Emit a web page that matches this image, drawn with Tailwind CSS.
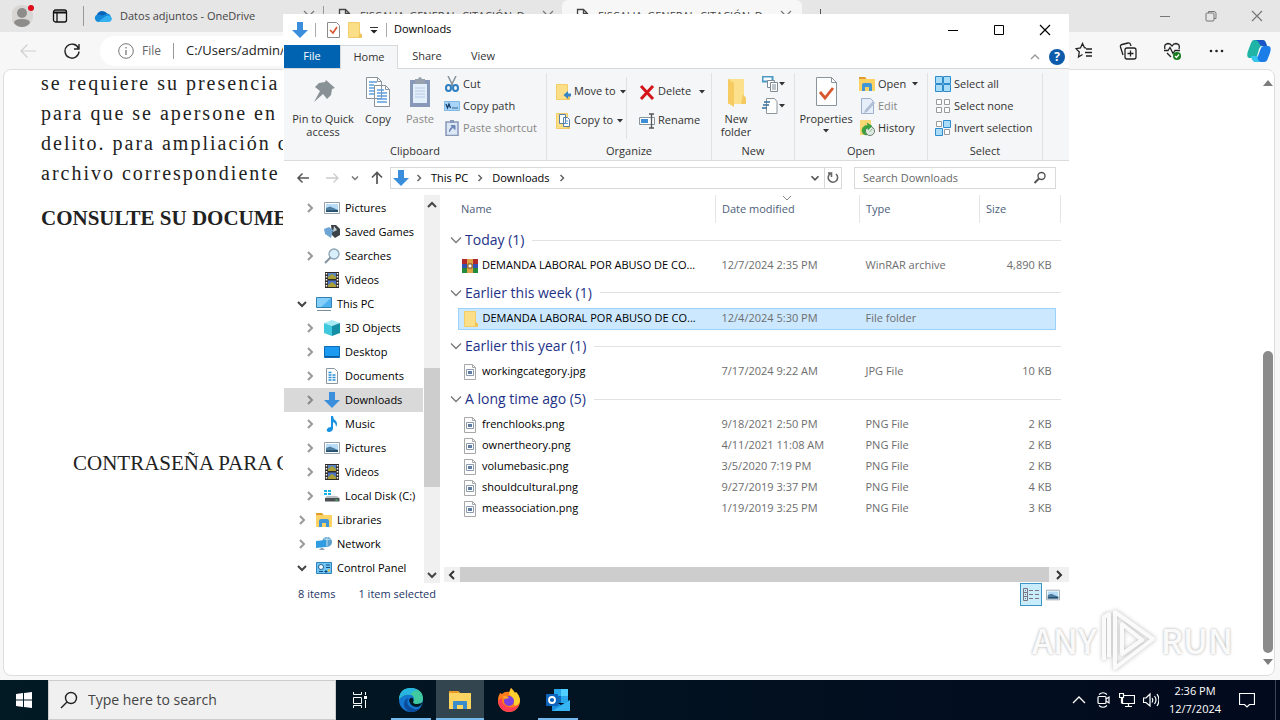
<!DOCTYPE html>
<html lang="en">
<head>
<meta charset="utf-8">
<meta name="viewport" content="width=device-width, initial-scale=1">
<title>Downloads</title>
<script src="https://cdn.jsdelivr.net/npm/@tailwindcss/browser@4"></script>
</head>
<body class="relative flex h-screen flex-col overflow-hidden bg-[#f7f7f7] font-['Open_Sans','Noto_Sans',sans-serif] text-[11px] text-black">

<!-- Shared icons -->
<svg class="hidden" aria-hidden="true">
  <symbol id="right" viewBox="0 0 16 16"><path d="M6 4l4 4-4 4" fill="none" stroke="currentColor" stroke-width="2"/></symbol>
  <symbol id="open" viewBox="0 0 16 16"><path d="M4 6l4 4 4-4" fill="none" stroke="currentColor" stroke-width="2"/></symbol>
  <symbol id="wide" viewBox="0 0 16 16"><path d="M3 5.500l5 5 5-5" fill="none" stroke="currentColor" stroke-width="1.3"/></symbol>
  <symbol id="caret" viewBox="0 0 8 8"><path d="M1 2h6L4 5.500z" fill="currentColor"/></symbol>
  <symbol id="x" viewBox="0 0 12 12"><path d="M1 1l10 10M11 1L1 11" fill="none" stroke="currentColor" stroke-width="1.2"/></symbol>
  <symbol id="doc" viewBox="0 0 16 16"><path d="M3.500 1.500h6l4 4v9h-10zM9.500 1.500v4h4" fill="none" stroke="#444" stroke-width="1.3"/></symbol>
  <symbol id="down" viewBox="0 0 16 16"><path d="M5 0h6v8h5l-8 8-8-8h5z" fill="#3a8edb"/></symbol>
  <symbol id="folder" viewBox="0 0 16 16"><path d="M1.500 .5h11v10.500l2 2v2.500h-13z" fill="#fbdf88" stroke="#f3cd68"/><path d="M12.500 10.500L15 13v2.500h-3.500z" fill="#f0c45a"/></symbol>
  <symbol id="pic" viewBox="0 0 16 16"><path d="M.5 2.500h15v11H.5z" fill="#fff" stroke="#93a1ab"/><path d="M2 4h12v8H2z" fill="#b7dcf6"/><path d="M2 8l4-1.500L14 10v2H2z" fill="#4c7c9f"/><path d="M2 10.500l12-.5v2H2z" fill="#24506e"/></symbol>
  <symbol id="img" viewBox="0 0 16 16"><path d="M2.500 .5h8l3 3v12h-11z" fill="#fdfdfd" stroke="#a8a8a8"/><path d="M10.500 .5v3h3" fill="none" stroke="#a8a8a8"/><path d="M4.500 5.500h7v6h-7z" fill="#fff" stroke="#8d9cad"/><path d="M6 7h4v3H6z" fill="#5f7ca5"/></symbol>
  <symbol id="film" viewBox="0 0 16 16"><path d="M1 0h14v16H1z" fill="#302b28"/><path d="M4 1h8v6H4z" fill="#5a86c8"/><path d="M4 8.500h8V15H4z" fill="#4d73c4"/><path d="M4 5l4-3 4 3v2H4zM4 13l4-3 4 3v2H4z" fill="#a9a136"/><path d="M2.500 1v14M13.500 1v14" stroke="#fff" stroke-width="1.500" stroke-dasharray="1.500 1.500"/></symbol>
  <symbol id="pc" viewBox="0 0 16 16"><path d="M.5 1.500h15v10H.5z" fill="#4eb2f0" stroke="#3281b4"/><path d="M1 2h14L5 11H1z" fill="#86cffa"/><path d="M1 14.500h14" stroke="#7d8b94"/></symbol>
  <symbol id="glass" viewBox="0 0 16 16"><circle cx="10" cy="6" r="5" fill="#d9effb" stroke="#8ba4b5" stroke-width="1.300"/><path d="M6.500 9.500L1 15" stroke="#8593a0" stroke-width="2"/></symbol>
  <symbol id="lib" viewBox="0 0 16 16"><path d="M0 1h6l1.500 2H16v12H0z" fill="#fbd264"/><path d="M0 1h6l1.500 2H0z" fill="#e19c2d"/><path d="M3 15V9q0-2 2-2h6q2 0 2 2v6h-3v-4H6v4z" fill="#3f97d8"/></symbol>
</svg>

<!-- Browser tab strip -->
<header class="flex h-8 shrink-0 items-center bg-[#e6e6e6] pl-3">
  <button aria-label="Profile" class="h-6 w-6 shrink-0"><svg viewBox="0 0 24 24"><circle cx="10" cy="12" r="11" fill="#d8d6d4"/><circle cx="10" cy="9" r="5" fill="#8e8c8a"/><path d="M2 19q0-4 8-4t8 4q-3 4-8 4t-8-4z" fill="#8e8c8a"/><circle cx="19" cy="4" r="3" fill="#e00b1c"/></svg></button>
  <button aria-label="Tab actions" class="ml-4 h-4 w-4 shrink-0"><svg viewBox="0 0 16 16" fill="none" stroke="#111" stroke-width="1.300"><rect x="1.500" y="2" width="13" height="12" rx="2"/><path d="M1.500 4.500h13" stroke-width="2"/><path d="M5 4.500V14"/></svg></button>
  <i class="ml-[15px] h-5 w-px bg-[#999]"></i>
  <div class="flex w-[239px] items-center pl-2.5">
    <svg class="h-4 w-[18px]" viewBox="0 0 18 16"><path d="M4 14a4 4 0 0 1-1-7.500A6 6 0 0 1 13 5.500 4.500 4.500 0 0 1 14.500 14z" fill="#1689d8"/><path d="M4 14L12 8q5-2 6 3-1 3-3.500 3z" fill="#35b1f2"/><path d="M3 6.500A6 6 0 0 1 13 5.500l-4 2z" fill="#0a63ba"/></svg>
    <span class="ml-2 flex-1 whitespace-nowrap text-[#444]">Datos adjuntos - OneDrive</span>
    <button aria-label="Close tab" class="mr-2 h-3 w-3 text-[#777]"><svg viewBox="0 0 12 12"><use href="#x"/></svg></button>
  </div>
  <i class="h-5 w-px bg-[#999]"></i>
  <div class="flex w-[238px] items-center pl-3">
    <svg class="h-4 w-4"><use href="#doc"/></svg>
    <span class="ml-2 w-[176px] whitespace-nowrap text-[#444]">FISCALIA_GENERAL_CITACIÓN_D</span>
    <button aria-label="Close tab" class="ml-1.5 h-3 w-3 text-[#777]"><svg viewBox="0 0 12 12"><use href="#x"/></svg></button>
  </div>
  <div class="flex h-8 w-[240px] items-center rounded-t-md bg-[#f7f7f7] pl-3">
    <svg class="h-4 w-4"><use href="#doc"/></svg>
    <span class="ml-2 w-[176px] whitespace-nowrap text-[#444]">FISCALIA_GENERAL_CITACIÓN_D</span>
    <button aria-label="Close tab" class="ml-1.5 h-3 w-3 text-[#777]"><svg viewBox="0 0 12 12"><use href="#x"/></svg></button>
  </div>
  <button aria-label="New tab" class="ml-2.5 h-4 w-4"><svg viewBox="0 0 16 16"><path d="M8.500 1v14M1 8h14" stroke="#555"/></svg></button>
  <div class="ml-auto flex gap-[34px] pr-[17px] text-[#777]">
    <button aria-label="Minimize" class="h-3 w-3"><svg viewBox="0 0 12 12"><path d="M1 6.500h10" stroke="currentColor"/></svg></button>
    <button aria-label="Restore" class="h-3 w-3"><svg viewBox="0 0 12 12" fill="none" stroke="currentColor"><rect x="1" y="3" width="8" height="8" rx="1"/><path d="M3.500 3V1.500H9q2 0 2 2V8.500H9"/></svg></button>
    <button aria-label="Close" class="h-3 w-3"><svg viewBox="0 0 12 12"><use href="#x"/></svg></button>
  </div>
</header>

<!-- Browser toolbar -->
<div class="flex h-[37px] shrink-0 items-center pl-5 text-[#222]">
  <button aria-label="Back" class="h-4 w-4"><svg viewBox="0 0 16 16" fill="none" stroke="#cfcfcf" stroke-width="1.200"><path d="M16 8H1M7.500 1.500L1 8l6.500 6.500"/></svg></button>
  <button aria-label="Refresh" class="ml-7 h-4 w-4"><svg viewBox="0 0 16 16" fill="none" stroke="currentColor" stroke-width="1.400"><path d="M14.500 5.500A7 7 0 1 0 15 8.500M15 1v5h-5"/></svg></button>
  <div class="ml-5 flex h-[30px] flex-1 items-center rounded-full bg-white pl-[18px]">
    <svg class="h-4 w-4" viewBox="0 0 16 16" fill="none" stroke="#777"><circle cx="8" cy="8" r="7.300"/><path d="M8 7v5M8 4v1.500" stroke-width="1.300"/></svg>
    <span class="ml-2 text-xs text-[#666]">File</span>
    <i class="mx-3 h-4 w-px bg-[#999]"></i>
    <input aria-label="Address" class="min-w-0 flex-1 text-[13px] text-[#222]" value="C:/Users/admin/">
  </div>
  <div class="ml-2 flex items-center gap-[26px] pr-[9px]">
    <button aria-label="Favorites" class="h-[18px] w-[18px]"><svg viewBox="0 0 18 18" fill="none" stroke="currentColor" stroke-width="1.300"><path d="M11 6L9.500 5.700 7.500 1.500 5.500 6 1 6.700l3.300 3.300L3.500 15l4-2.500M11 7h6M10 10.500h7M11 14h6"/></svg></button>
    <button aria-label="Collections" class="h-[18px] w-[18px]"><svg viewBox="0 0 18 18" fill="none" stroke="currentColor" stroke-width="1.300"><rect x="6" y="6" width="11" height="11" rx="2"/><path d="M11.500 8.500v6M8.500 11.500h6M4 13L1.500 5q-.5-2 1.500-2.500l6-1.500q2-.3 2.500 1.500l.5 1.500"/></svg></button>
    <button aria-label="Browser essentials" class="h-[18px] w-[18px]"><svg viewBox="0 0 18 18" fill="none" stroke="currentColor" stroke-width="1.300"><path d="M2 7q-1.500-5 3-5.500Q7.500 1.500 9 4q1.500-2.500 4-2.500 4.500.5 3 5.500M4 11l4 4M1 8.500h4l2-3 3 6 2-3h5"/><circle cx="14" cy="14" r="4" fill="#177c1b" stroke="none"/><path d="M12 14l1.500 1.500L16 12.500" stroke="#fff"/></svg></button>
    <button aria-label="Settings and more" class="h-[18px] w-[18px]"><svg viewBox="0 0 18 18" fill="currentColor"><circle cx="4" cy="9" r="1.300"/><circle cx="9.500" cy="9" r="1.300"/><circle cx="15" cy="9" r="1.300"/></svg></button>
    <button aria-label="Copilot" class="-ml-1 h-6 w-6"><svg viewBox="0 0 24 24"><path d="M7 1h9q2 0 3 3l1 3h-5q-2 0-3 3l-2 7q-1 2-3 2H2q-3-1-1-7L4 4q1-3 3-3z" fill="#20b4a6"/><path d="M7 1h9q2 0 3 3l1 3h-4q-3 0-4-3-1-3-5-3z" fill="#1c55c8"/><path d="M17 7h4q4 0 2 7l-2 5q-1 4-4 4H9q-3 0-4-4h3q2 0 3-2l3-8q1-2 3-2z" fill="#1a7de8"/><path d="M4 17h6q1 6 5 6H9q-4 0-5-6z" fill="#35c6ee"/></svg></button>
  </div>
</div>

<!-- Page viewport -->
<main class="mr-[5px] mb-1 ml-[3px] flex min-h-0 flex-1 overflow-hidden rounded-lg border border-[#dedede] bg-white">
  <article class="flex-1 overflow-hidden pl-[37px] font-['Liberation_Serif',serif] text-xl leading-[30px] whitespace-nowrap text-[#222]">
    <p class="-mt-[2px] tracking-widest">se requiere su presencia<br>para que se apersone en<br>delito. para ampliación d<br>archivo correspondiente</p>
    <p class="mt-[15px] text-[21px] font-bold">CONSULTE SU DOCUME</p>
    <p class="mt-[215px] ml-8 text-[21px]">CONTRASEÑA PARA C</p>
  </article>
  <div class="flex w-3 flex-col items-center py-2" role="scrollbar" aria-label="Page scroll" aria-valuenow="90">
    <svg class="h-2.5 w-2.5" viewBox="0 0 10 10"><path d="M5 2l5 6H0z" fill="#7d7d7d"/></svg>
    <div class="mt-auto h-[302px] w-2.5 rounded-full bg-[#8b8b8b]"></div>
    <svg class="mt-1 h-2.5 w-2.5" viewBox="0 0 10 10"><path d="M0 2h10L5 8z" fill="#7d7d7d"/></svg>
  </div>
</main>

<!-- File Explorer window -->
<section aria-label="File Explorer" class="absolute top-[14px] left-[283px] flex w-[786px] flex-col bg-white pl-px [&_svg]:shrink-0">
  <div class="flex h-[31px] items-center pl-2">
    <svg class="h-4 w-4"><use href="#down"/></svg>
    <i class="ml-[7px] h-3.5 w-px bg-[#aaa]"></i>
    <button aria-label="Properties" class="ml-[9px] h-4 w-4"><svg viewBox="0 0 16 16"><path d="M2.500 .5h9l3 3v12h-12z" fill="#fff" stroke="#8b8b8b"/><path d="M5 8l3 3 4-6" fill="none" stroke="#d65532" stroke-width="1.700"/></svg></button>
    <button aria-label="New folder" class="ml-1.5 h-4 w-4"><svg viewBox="0 0 16 16"><use href="#folder"/></svg></button>
    <button aria-label="Customize toolbar" class="ml-[5px] h-3 w-3"><svg viewBox="0 0 12 12"><path d="M2 3.500h8" stroke="#333"/><path d="M2.500 6h7L6 9.500z" fill="#222"/></svg></button>
    <i class="ml-1.5 h-3.5 w-px bg-[#aaa]"></i>
    <h1 class="ml-[7px] text-[11px]">Downloads</h1>
    <div class="ml-auto flex gap-[34px] pr-[18px]">
      <button aria-label="Minimize" class="h-3 w-3"><svg viewBox="0 0 12 12"><path d="M1 6.500h10" stroke="#000"/></svg></button>
      <button aria-label="Maximize" class="h-3 w-3"><svg viewBox="0 0 12 12"><path d="M1.500 1.500h9v9h-9z" fill="none" stroke="#000"/></svg></button>
      <button aria-label="Close" class="h-3 w-3"><svg viewBox="0 0 12 12"><use href="#x"/></svg></button>
    </div>
  </div>

  <div class="flex h-6 items-stretch border-b border-[#d6d8da] text-[#333]">
    <button class="w-14 bg-[#0063b1] text-white">File</button>
    <button class="-mb-px w-[58px] border border-b-0 border-[#d6d8da] bg-[#f5f6f7]">Home</button>
    <button class="w-[58px]">Share</button>
    <button class="w-[54px]">View</button>
    <button aria-label="Collapse ribbon" class="mr-1.5 ml-auto w-4 text-[#999]"><svg class="h-4 w-4 rotate-180" viewBox="0 0 16 16"><path d="M4 6l4 4 4-4" fill="none" stroke="currentColor" stroke-width="1.400"/></svg></button>
    <button aria-label="Help" class="mr-1 grid w-4 place-items-center"><span class="grid h-4 w-4 place-items-center rounded-full bg-[#0d5bab] text-xs font-bold text-white">?</span></button>
  </div>

  <!-- Ribbon -->
  <div class="flex h-[92px] border-b border-[#d9dbdd] bg-[#f5f6f7] pt-1 text-[#333]">
    <div class="flex w-[263px] flex-col border-r border-[#e0e2e4]">
      <div class="flex h-[66px]">
        <button class="flex w-[78px] flex-col items-center pt-[3px] leading-[13px]"><svg class="mb-1 h-8 w-8" viewBox="0 0 32 32"><path d="M19 4l9 8-3 1-1 6-4 4-4-5-9 8 6-11-5-4 4-4 6-1z" fill="#889196"/></svg><span class="whitespace-nowrap">Pin to Quick</span><span>access</span></button>
        <button class="flex w-8 flex-col items-center pt-[3px] leading-[13px]"><svg class="mb-1 h-8 w-8" viewBox="0 0 32 32"><path d="M4.500 1.500h11l4 4v17h-15zM12.500 9.500h11l4 4v17h-15z" fill="#fff" stroke="#8a949c"/><path d="M15.500 1.500v4h4M23.500 9.500v4h4" fill="none" stroke="#8a949c"/><path d="M7 6h8M7 9h5M7 12h5M7 15h5M7 18h5M15 14h7M15 17h10M15 20h10M15 23h10M15 26h10" stroke="#5c9de0" stroke-width="1.500"/></svg>Copy</button>
        <button class="ml-2.5 flex w-8 flex-col items-center pt-[3px] leading-[13px] text-[#888]"><svg class="mb-1 h-8 w-8" viewBox="0 0 32 32"><path d="M6 4h20v27H6z" fill="#8798b8"/><path d="M9 8h14v19H9z" fill="#e3eefb"/><path d="M11 3h3q2-4 4 0h3v5H11z" fill="#97a1ad"/><path d="M11 12h10M11 15h10M11 18h10M11 21h10" stroke="#b7c9e6"/></svg>Paste</button>
        <div class="ml-2 flex flex-col whitespace-nowrap">
          <button class="flex h-[22px] items-center gap-[3px]"><svg class="h-4 w-4" viewBox="0 0 16 16" fill="none"><path d="M4 0l5 10M12 0L7 10" stroke="#87929b" stroke-width="1.500"/><ellipse cx="4.500" cy="12" rx="2.500" ry="3" stroke="#2e7fc2" stroke-width="2"/><ellipse cx="11.500" cy="12" rx="2.500" ry="3" stroke="#2e7fc2" stroke-width="2"/></svg>Cut</button>
          <button class="flex h-[22px] items-center gap-[3px]"><svg class="h-4 w-4" viewBox="0 0 16 16"><path d="M.5 3.500h15v9H.5z" fill="#a7d4f7" stroke="#7eb8e6"/><path d="M2 6l1.500 4L5 6l1.500 4M8.500 10h1M10.500 10h1M12.500 10h1" fill="none" stroke="#123e6d" stroke-width="1.300"/></svg>Copy path</button>
          <button class="flex h-[22px] items-center gap-[3px] text-[#888]"><svg class="h-4 w-4" viewBox="0 0 16 16"><path d="M2 2h12v13.500H2z" fill="#dce7f5" stroke="#8798b8" stroke-width="1.500"/><path d="M6 0h4v3H6z" fill="#8798b8"/><path d="M5.500 12q0-5 4-5M7 5.500h4v4z" fill="#6b86b5" stroke="#6b86b5"/></svg>Paste shortcut</button>
        </div>
      </div>
      <p class="pt-1 text-center leading-4">Clipboard</p>
    </div>

    <div class="flex w-[165px] flex-col border-r border-[#e0e2e4]">
      <div class="flex h-[66px] pt-1">
        <div class="flex w-20 flex-col border-r border-[#e0e2e4] pl-2 whitespace-nowrap">
          <button class="flex h-[29px] items-center gap-[3px]"><svg class="h-4 w-4" viewBox="0 0 16 16"><use href="#folder"/><path d="M16 9.500h-3V7L8.500 11l4.500 4v-2.500h3z" fill="#3584c8"/></svg>Move to<svg class="h-2 w-2"><use href="#caret"/></svg></button>
          <button class="flex h-[29px] items-center gap-[3px]"><svg class="h-4 w-4" viewBox="0 0 16 16"><use href="#folder"/><path d="M4.500 1.500h6v9h-6zM8.500 4.500h4l2 2v7h-6z" fill="#fff" stroke="#577fa8"/><path d="M10 8h3M10 10.500h3" stroke="#5c9de0"/></svg>Copy to<svg class="h-2 w-2"><use href="#caret"/></svg></button>
        </div>
        <div class="flex flex-col pl-3 whitespace-nowrap">
          <button class="flex h-[29px] items-center gap-[3px]"><svg class="h-4 w-4" viewBox="0 0 16 16"><path d="M2 2l12 13M14 2L2 15" stroke="#d4161b" stroke-width="3"/></svg>Delete<svg class="ml-1 h-2 w-2"><use href="#caret"/></svg></button>
          <button class="flex h-[29px] items-center gap-[3px]"><svg class="h-4 w-4" viewBox="0 0 16 16"><path d="M.5 4.500h15v7H.5z" fill="#fff" stroke="#8a949c"/><path d="M2 6h7v4H2z" fill="#3d8ed4"/><path d="M10 1h5M10 15h5M12.500 1v14" stroke="#555" stroke-width="1.300"/></svg>Rename</button>
        </div>
      </div>
      <p class="pt-1 text-center leading-4">Organize</p>
    </div>

    <div class="flex w-[83px] flex-col border-r border-[#e0e2e4]">
      <div class="flex h-[66px]">
        <button class="flex w-12 flex-col items-center pt-[3px] leading-[13px]"><svg class="mb-1 h-8 w-8" viewBox="0 0 32 32"><path d="M8 3h16v17l2 3v5H8z" fill="#fce08c"/><path d="M8 3l6 4v24l-6-4z" fill="#f6cb62"/><path d="M23 18l3 4v6h-5z" fill="#f5ca60"/></svg><span>New</span><span>folder</span></button>
        <div class="flex flex-col pl-0.5">
          <button aria-label="New item" class="flex h-[22px] items-center"><svg class="h-4 w-4" viewBox="0 0 16 16" fill="#fff" stroke="#7d8b96"><path d="M.5 .5h10v5H.5z" stroke="#4a9ac4" stroke-width="2"/><path d="M5.500 4.500h7v7h-7z"/><path d="M8.500 6.500h7v9h-7zM10 9h4M10 11h4M10 13h4"/></svg><svg class="h-2 w-2"><use href="#caret"/></svg></button>
          <button aria-label="Easy access" class="flex h-[22px] items-center"><svg class="h-4 w-4" viewBox="0 0 16 16"><path d="M4.500 .5h8l2.500 3v12H4.500z" fill="#fff" stroke="#8a949c"/><path d="M2 4h6M1 7h6M0 10h5" stroke="#356f9f" stroke-width="1.300"/></svg><svg class="h-2 w-2"><use href="#caret"/></svg></button>
        </div>
      </div>
      <p class="pt-1 text-center leading-4">New</p>
    </div>

    <div class="flex w-[133px] flex-col border-r border-[#e0e2e4]">
      <div class="flex h-[66px]">
        <button class="flex w-[62px] flex-col items-center pt-[3px] leading-[13px]"><svg class="mb-1 h-8 w-8" viewBox="0 0 32 32"><path d="M6.500 1.500h15l5 5v23h-20z" fill="#fff" stroke="#8a949c"/><path d="M21.500 1.500v5h5" fill="none" stroke="#8a949c"/><path d="M10 16l5 6 8-10" fill="none" stroke="#d9572e" stroke-width="2.800"/></svg>Properties<svg class="mt-0.5 h-2 w-2"><use href="#caret"/></svg></button>
        <div class="flex flex-col pl-0.5 whitespace-nowrap">
          <button class="flex h-[22px] items-center gap-[3px]"><svg class="h-4 w-4" viewBox="0 0 16 16"><use href="#lib"/></svg>Open<svg class="ml-0.5 h-2 w-2"><use href="#caret"/></svg></button>
          <button class="flex h-[22px] items-center gap-[3px] text-[#888]"><svg class="h-4 w-4" viewBox="0 0 16 16"><path d="M2.500 .5h9l3 3v12h-12z" fill="#e6eefa" stroke="#9fb0cc"/><path d="M14 3l-8 9-1 3 3-1 8-9z" fill="#b0bfd6"/></svg>Edit</button>
          <button class="flex h-[22px] items-center gap-[3px]"><svg class="h-4 w-4" viewBox="0 0 16 16"><path d="M1 0h11v15H1z" fill="#f8d775"/><circle cx="11" cy="11" r="4.500" fill="#dfe9e2" stroke="#6b7d70"/><path d="M13.500 8.500L10.500 12M3 10q1-5 6-4.500L8 3l5 3-4 4V8q-3 0-3 3 0 2 2 4-5 0-5-5z" fill="#36a541" stroke="#2f8a38" stroke-width=".5"/></svg>History</button>
        </div>
      </div>
      <p class="pt-1 text-center leading-4">Open</p>
    </div>

    <div class="flex w-[115px] flex-col border-r border-[#e0e2e4]">
      <div class="flex h-[66px] flex-col pl-[7px] whitespace-nowrap">
        <button class="flex h-[22px] items-center gap-[3px]"><svg class="h-4 w-4" viewBox="0 0 16 16" fill="#a9dcf9" stroke="#2e8ccd"><path d="M.5 .5h7v7h-7zM8.500 .5h7v7h-7zM.5 8.500h7v7h-7zM8.500 8.500h7v7h-7z"/></svg>Select all</button>
        <button class="flex h-[22px] items-center gap-[3px]"><svg class="h-4 w-4" viewBox="0 0 16 16" fill="#fff" stroke="#9a9a9a"><path d="M1.500 1.500h5v5h-5zM9.500 1.500h5v5h-5zM1.500 9.500h5v5h-5zM9.500 9.500h5v5h-5z"/></svg>Select none</button>
        <button class="flex h-[22px] items-center gap-[3px]"><svg class="h-4 w-4" viewBox="0 0 16 16"><path d="M1.500 1.500h5v5h-5zM9.500 9.500h5v5h-5z" fill="#fff" stroke="#9a9a9a"/><path d="M8.500 .5h7v7h-7zM.5 8.500h7v7h-7z" fill="#a9dcf9" stroke="#2e8ccd"/></svg>Invert selection</button>
      </div>
      <p class="pt-1 text-center leading-4">Select</p>
    </div>
  </div>

  <!-- Address bar -->
  <div class="flex h-[34px] items-center pl-[11px] text-[#333]">
    <button aria-label="Back" class="h-4 w-4"><svg viewBox="0 0 16 16" fill="none" stroke="#555" stroke-width="1.500"><path d="M14 8H3M7.500 3.500L3 8l4.500 4.500"/></svg></button>
    <button aria-label="Forward" class="ml-3.5 h-4 w-4"><svg viewBox="0 0 16 16" fill="none" stroke="#ccc" stroke-width="1.300"><path d="M1 8h11M8.500 3.500L13 8l-4.500 4.500"/></svg></button>
    <button aria-label="Recent locations" class="ml-2 h-3 w-3 text-[#777]"><svg viewBox="0 0 16 16"><use href="#open"/></svg></button>
    <button aria-label="Up" class="ml-2 h-4 w-4"><svg viewBox="0 0 16 16" fill="none" stroke="#555" stroke-width="1.700"><path d="M8 14V3M3 7.500L8 2.500l5 5"/></svg></button>
    <nav aria-label="Location" class="ml-[5px] flex h-[22px] flex-1 items-center border border-[#d9d9d9] pl-0.5 whitespace-nowrap">
      <svg class="h-4 w-4"><use href="#down"/></svg>
      <svg class="ml-1 h-3 w-3 text-[#666]"><use href="#right"/></svg>
      <a href="#" class="ml-1.5 text-black">This PC</a>
      <svg class="mx-1.5 h-3 w-3 text-[#666]"><use href="#right"/></svg>
      <a href="#" class="text-black">Downloads</a>
      <svg class="ml-1.5 h-3 w-3 text-[#666]"><use href="#right"/></svg>
      <button aria-label="Previous locations" class="mr-0.5 ml-auto h-3.5 w-3.5 text-[#555]"><svg viewBox="0 0 16 16"><use href="#open"/></svg></button>
      <button aria-label="Refresh" class="flex h-full w-[17px] items-center justify-center border-l border-[#d9d9d9]"><svg class="h-3.5 w-3.5" viewBox="0 0 14 14" fill="none" stroke="#666" stroke-width="1.600"><path d="M10 3a4.700 4.700 0 1 1-5.500-.5M2 2h3.500v4"/></svg></button>
    </nav>
    <label class="mr-[13px] ml-3 flex h-[22px] w-[202px] items-center border border-[#d9d9d9] pr-2 pl-2">
      <input type="text" aria-label="Search Downloads" placeholder="Search Downloads" class="min-w-0 flex-1 placeholder:text-[#666]">
      <svg class="h-3.5 w-3.5" viewBox="0 0 14 14" fill="none" stroke="#555" stroke-width="1.400"><circle cx="8.500" cy="5" r="3.500"/><path d="M6 7.500L1.500 12" stroke-width="2"/></svg>
    </label>
  </div>

  <div class="flex h-[388px]">
    <!-- Navigation tree -->
    <ul class="w-[139px] overflow-hidden pt-px leading-6 whitespace-nowrap">
      <li class="flex h-6 items-center pl-[18px]"><svg class="mr-1.5 h-4 w-4 text-[#999]"><use href="#right"/></svg><svg class="mr-[5px] h-4 w-4"><use href="#pic"/></svg>Pictures</li>
      <li class="flex h-6 items-center pl-10"><svg class="mr-[5px] h-4 w-4" viewBox="0 0 16 16"><path d="M7 1l5 0 4 4v6l-5 3-3-3z" fill="#3b4347"/><path d="M0 5l5-2 4 3-2 8-6-4z" fill="#6ea5d3"/><path d="M10 2l3 4-4 2z" fill="#c9d3da"/></svg>Saved Games</li>
      <li class="flex h-6 items-center pl-[18px]"><svg class="mr-1.5 h-4 w-4 text-[#999]"><use href="#right"/></svg><svg class="mr-[5px] h-4 w-4"><use href="#glass"/></svg>Searches</li>
      <li class="flex h-6 items-center pl-10"><svg class="mr-[5px] h-4 w-4"><use href="#film"/></svg>Videos</li>
      <li class="flex h-6 items-center pl-2.5"><svg class="mr-[6px] h-4 w-4 text-[#444]"><use href="#open"/></svg><svg class="mr-[5px] h-4 w-4"><use href="#pc"/></svg>This PC</li>
      <li class="flex h-6 items-center pl-[18px]"><svg class="mr-1.5 h-4 w-4 text-[#999]"><use href="#right"/></svg><svg class="mr-[5px] h-4 w-4" viewBox="0 0 16 16"><path d="M0 3l8-3 8 3-8 3z" fill="#a8ebf5"/><path d="M0 3l8 3v10l-8-3z" fill="#40c8de"/><path d="M16 3L8 6v10l8-3z" fill="#168ea6"/></svg>3D Objects</li>
      <li class="flex h-6 items-center pl-[18px]"><svg class="mr-1.5 h-4 w-4 text-[#999]"><use href="#right"/></svg><svg class="mr-[5px] h-4 w-4" viewBox="0 0 16 16"><path d="M.5 2.500h15v11H.5z" fill="#1a9bf1" stroke="#0b6cb8"/><path d="M1 12.500h14" stroke="#0b5a9c"/></svg>Desktop</li>
      <li class="flex h-6 items-center pl-[18px]"><svg class="mr-1.5 h-4 w-4 text-[#999]"><use href="#right"/></svg><svg class="mr-[5px] h-4 w-4" viewBox="0 0 16 16"><path d="M2.500 .5h8l3 3v12h-11z" fill="#fff" stroke="#8b97a0"/><path d="M4.500 4.500h4M4.500 7h7M4.500 9.500h7M4.500 12h7" stroke="#2f8fd4" stroke-width="1.500" stroke-dasharray="3 1"/></svg>Documents</li>
      <li class="flex h-6 items-center bg-[#d9d9d9] pl-[18px]" aria-current="true"><svg class="mr-1.5 h-4 w-4 text-[#888]"><use href="#right"/></svg><svg class="mr-[5px] h-4 w-4"><use href="#down"/></svg>Downloads</li>
      <li class="flex h-6 items-center pl-[18px]"><svg class="mr-1.5 h-4 w-4 text-[#999]"><use href="#right"/></svg><svg class="mr-[5px] h-4 w-4" viewBox="0 0 16 16"><path d="M7 0h2q0 3 3 5 2 3 0 6 0-4-3-5v7q-1 3-4 3-3-.5-2-3 1-2 4-2z" fill="#1592e2"/></svg>Music</li>
      <li class="flex h-6 items-center pl-[18px]"><svg class="mr-1.5 h-4 w-4 text-[#999]"><use href="#right"/></svg><svg class="mr-[5px] h-4 w-4"><use href="#pic"/></svg>Pictures</li>
      <li class="flex h-6 items-center pl-[18px]"><svg class="mr-1.5 h-4 w-4 text-[#999]"><use href="#right"/></svg><svg class="mr-[5px] h-4 w-4"><use href="#film"/></svg>Videos</li>
      <li class="flex h-6 items-center pl-[18px]"><svg class="mr-1.5 h-4 w-4 text-[#999]"><use href="#right"/></svg><svg class="mr-[5px] h-4 w-4" viewBox="0 0 16 16"><path d="M0 2h3v2H0zM4 2h3v2H4zM0 5h3v2H0zM4 5h3v2H4z" fill="#18b2e8"/><path d="M3 8h10l2.500 2H1z" fill="#b9bfc3"/><path d="M1 10h14.500v3.500H1z" fill="#4b5155"/><path d="M11.500 12h2" stroke="#4de06a"/></svg>Local Disk (C:)</li>
      <li class="flex h-6 items-center pl-2.5"><svg class="mr-[6px] h-4 w-4 text-[#999]"><use href="#right"/></svg><svg class="mr-[5px] h-4 w-4"><use href="#lib"/></svg>Libraries</li>
      <li class="flex h-6 items-center pl-2.5"><svg class="mr-[6px] h-4 w-4 text-[#999]"><use href="#right"/></svg><svg class="mr-[5px] h-4 w-4" viewBox="0 0 16 16"><circle cx="11" cy="6" r="5" fill="#5aa0cc"/><path d="M8 3q4 1 7 0M11 1v9" stroke="#b9dff4" fill="none"/><path d="M0 5l10-1v7L0 12z" fill="#2f9be0"/><path d="M3 14h6l-2-2H5z" fill="#8fa3b0"/></svg>Network</li>
      <li class="flex h-6 items-center pl-2.5"><svg class="mr-[6px] h-4 w-4 text-[#444]"><use href="#open"/></svg><svg class="mr-[5px] h-4 w-4" viewBox="0 0 16 16"><path d="M.5 2.500h15v11H.5z" fill="#6fc6f4" stroke="#2f83b8"/><circle cx="5" cy="7" r="2.500" fill="#fff" stroke="#1b5f93"/><path d="M10 5h4M10 7.500h4M3 11.500h4M9 11h2v1H9z" stroke="#114b7c"/><path d="M12 10.500h2" stroke="#f2c23b" stroke-width="2"/></svg>Control Panel</li>
    </ul>
    <div class="ml-px flex w-4 flex-col items-center bg-[#f0f0f0] text-[#444]" role="scrollbar" aria-label="Tree scroll" aria-valuenow="60">
      <svg class="mt-0.5 h-4 w-4 rotate-180"><use href="#open"/></svg>
      <div class="mt-auto mb-20 h-[119px] w-4 bg-[#cdcdcd]"></div>
      <svg class="h-4 w-4"><use href="#open"/></svg>
    </div>

    <!-- File list -->
    <div class="ml-1 flex min-w-0 flex-1 flex-col">
      <table class="mr-2 table-fixed border-collapse text-left text-[#6d6d6d]">
        <colgroup><col class="w-[14px]"><col><col class="w-36"><col class="w-[120px]"><col class="w-[76px]"><col class="w-[5px]"></colgroup>
        <thead class="text-[#4c607a]">
          <tr class="h-7">
            <td></td>
            <th class="border-r border-[#e5e5e5] pl-[3px] font-normal">Name</th>
            <th class="relative border-r border-[#e5e5e5] pl-1.5 font-normal">Date modified<svg class="absolute top-0 left-[65px] h-2 w-3 text-[#888]" viewBox="0 0 12 8"><path d="M2 1l4 4 4-4" fill="none" stroke="currentColor"/></svg></th>
            <th class="border-r border-[#e5e5e5] pl-1.5 font-normal">Type</th>
            <th class="pl-1.5 font-normal">Size</th>
            <td class="border-r border-[#e5e5e5]"></td>
          </tr>
        </thead>
        <tbody>
          <tr class="h-8"><th colspan="6" class="pt-0.5 font-normal"><div class="flex items-center pl-1"><svg class="mr-px h-4 w-4 text-[#777]"><use href="#wide"/></svg><span class="text-sm text-[#1e3287]">Today (1)</span><i class="ml-2 h-px flex-1 bg-[#e2e2e2]"></i></div></th></tr>
          <tr class="h-[21px]"><td></td><td class="text-black"><div class="flex items-center pl-1 whitespace-nowrap"><svg class="mr-1 h-4 w-4" viewBox="0 0 16 16"><path d="M0 1h16v5H0z" fill="#b0282c"/><path d="M0 6h16v4H0z" fill="#3550b5"/><path d="M0 10h16v5H0z" fill="#238a3c"/><path d="M5 1h6v14H5z" fill="#e0a246"/><path d="M6 6h4v4H6z" fill="#fff" stroke="#7b4d16"/></svg>DEMANDA LABORAL POR ABUSO DE CO...</div></td><td class="pl-1.5">12/7/2024 2:35 PM</td><td class="pl-1.5">WinRAR archive</td><td class="pr-1 text-right">4,890 KB</td><td></td></tr>
          <tr class="h-8"><th colspan="6" class="pt-0.5 font-normal"><div class="flex items-center pl-1"><svg class="mr-px h-4 w-4 text-[#777]"><use href="#wide"/></svg><span class="text-sm text-[#1e3287]">Earlier this week (1)</span><i class="ml-2 h-px flex-1 bg-[#e2e2e2]"></i></div></th></tr>
          <tr class="h-[21px]" aria-selected="true"><td></td><td class="border border-r-0 border-[#99d1ff] bg-[#cce8ff] text-black"><div class="flex items-center pl-1 whitespace-nowrap"><svg class="mr-1 h-4 w-4"><use href="#folder"/></svg>DEMANDA LABORAL POR ABUSO DE CO...</div></td><td class="border-y border-[#99d1ff] bg-[#cce8ff] pl-1.5">12/4/2024 5:30 PM</td><td class="border-y border-[#99d1ff] bg-[#cce8ff] pl-1.5">File folder</td><td class="border border-l-0 border-[#99d1ff] bg-[#cce8ff]"></td><td></td></tr>
          <tr class="h-8"><th colspan="6" class="pt-0.5 font-normal"><div class="flex items-center pl-1"><svg class="mr-px h-4 w-4 text-[#777]"><use href="#wide"/></svg><span class="text-sm text-[#1e3287]">Earlier this year (1)</span><i class="ml-2 h-px flex-1 bg-[#e2e2e2]"></i></div></th></tr>
          <tr class="h-[21px]"><td></td><td class="text-black"><div class="flex items-center pl-1"><svg class="mr-1 h-4 w-4"><use href="#img"/></svg>workingcategory.jpg</div></td><td class="pl-1.5">7/17/2024 9:22 AM</td><td class="pl-1.5">JPG File</td><td class="pr-1 text-right">10 KB</td><td></td></tr>
          <tr class="h-8"><th colspan="6" class="pt-0.5 font-normal"><div class="flex items-center pl-1"><svg class="mr-px h-4 w-4 text-[#777]"><use href="#wide"/></svg><span class="text-sm text-[#1e3287]">A long time ago (5)</span><i class="ml-2 h-px flex-1 bg-[#e2e2e2]"></i></div></th></tr>
          <tr class="h-[21px]"><td></td><td class="text-black"><div class="flex items-center pl-1"><svg class="mr-1 h-4 w-4"><use href="#img"/></svg>frenchlooks.png</div></td><td class="pl-1.5">9/18/2021 2:50 PM</td><td class="pl-1.5">PNG File</td><td class="pr-1 text-right">2 KB</td><td></td></tr>
          <tr class="h-[21px]"><td></td><td class="text-black"><div class="flex items-center pl-1"><svg class="mr-1 h-4 w-4"><use href="#img"/></svg>ownertheory.png</div></td><td class="pl-1.5">4/11/2021 11:08 AM</td><td class="pl-1.5">PNG File</td><td class="pr-1 text-right">2 KB</td><td></td></tr>
          <tr class="h-[21px]"><td></td><td class="text-black"><div class="flex items-center pl-1"><svg class="mr-1 h-4 w-4"><use href="#img"/></svg>volumebasic.png</div></td><td class="pl-1.5">3/5/2020 7:19 PM</td><td class="pl-1.5">PNG File</td><td class="pr-1 text-right">2 KB</td><td></td></tr>
          <tr class="h-[21px]"><td></td><td class="text-black"><div class="flex items-center pl-1"><svg class="mr-1 h-4 w-4"><use href="#img"/></svg>shouldcultural.png</div></td><td class="pl-1.5">9/27/2019 3:37 PM</td><td class="pl-1.5">PNG File</td><td class="pr-1 text-right">4 KB</td><td></td></tr>
          <tr class="h-[21px]"><td></td><td class="text-black"><div class="flex items-center pl-1"><svg class="mr-1 h-4 w-4"><use href="#img"/></svg>meassociation.png</div></td><td class="pl-1.5">1/19/2019 3:25 PM</td><td class="pl-1.5">PNG File</td><td class="pr-1 text-right">3 KB</td><td></td></tr>
        </tbody>
      </table>
      <div class="mt-auto mb-px flex h-[15px] items-center bg-[#f0f0f0] text-[#333]" role="scrollbar" aria-label="List scroll" aria-valuenow="0">
        <svg class="h-4 w-4 rotate-180"><use href="#right"/></svg>
        <div class="h-[15px] flex-1 bg-[#cdcdcd]"></div>
        <svg class="mx-0.5 h-4 w-4"><use href="#right"/></svg>
      </div>
    </div>
  </div>

  <footer class="flex h-[23px] items-center pl-3.5 text-[#1d3566]">
    <span>8 items</span><span class="ml-[23px]">1 item selected</span>
    <button aria-label="Details view" class="ml-auto grid h-[23px] w-[22px] place-items-center border border-[#3c95c6] bg-[#c9ecfb]"><svg class="h-4 w-4" viewBox="0 0 16 16" fill="none" stroke="#7b7480"><path d="M.5 1.500h4v4h-4zM.5 5.500h4v4h-4zM.5 9.500h4v4h-4zM2 3.500h1M2 7.500h1M2 11.500h1M6 3.500h4M12 3.500h4M6 7.500h4M12 7.500h4M6 11.500h4M12 11.500h4"/></svg></button>
    <button aria-label="Large icons view" class="mr-[9px] ml-1 h-3.5 w-3.5"><svg viewBox="0 0 16 16"><use href="#pic"/></svg></button>
  </footer>
</section>

<!-- Watermark -->
<div class="pointer-events-none absolute right-[47px] bottom-[48px] flex items-center gap-1 font-['Noto_Sans_CJK_SC','Liberation_Sans',sans-serif] text-[34px] leading-none font-medium text-[#fafafa] [text-shadow:0_0_3px_#a8a8a8]">
  <span>ANY</span>
  <svg class="h-16 w-14 drop-shadow-[0_0_2px_#bbb]" viewBox="0 0 56 64" fill="none" stroke="#fafafa" stroke-width="4" stroke-linejoin="round"><path d="M3 52V9l5-3v43M14 4l38 27-38 29zM21 16v30l20-14z"/></svg>
  <span>RUN</span>
</div>

<!-- Taskbar -->
<footer class="flex h-10 shrink-0 items-center bg-linear-to-r from-[#021a24] to-[#020a1d] text-xs text-white">
  <button aria-label="Start" class="grid h-10 w-12 place-items-center"><svg class="h-4 w-4" viewBox="0 0 16 16" fill="#fff"><path d="M0 2l7-1v6.500H0zM8 1l8-1v7.500H8zM0 8.500h7V15l-7-1zM8 8.500h8V16l-8-1z"/></svg></button>
  <label class="flex h-10 w-72 items-center gap-2.5 border border-[#ccc] bg-[#f0f0f0] pl-[11px] text-[#333]">
    <svg class="h-[18px] w-[18px]" viewBox="0 0 18 18" fill="none" stroke="#222" stroke-width="1.400"><circle cx="11" cy="7" r="5.500"/><path d="M7 11l-6 6"/></svg>
    <input type="text" aria-label="Search" placeholder="Type here to search" class="min-w-0 flex-1 text-sm placeholder:text-[#444]">
  </label>
  <button aria-label="Task view" class="grid h-10 w-12 place-items-center"><svg class="h-4 w-4" viewBox="0 0 16 16" fill="none" stroke="#fff"><path d="M1.500 0v2.500h8V0M1.500 5.500h8v6h-8zM1.500 16v-2.500h8V16M13.500 0v3M13.500 8v8"/><path d="M12 4h3v3h-3z" fill="#fff" stroke="none"/></svg></button>
  <button aria-label="Edge" class="ml-[7px] flex h-10 w-10 flex-col items-center justify-end"><svg class="mb-1.5 h-6 w-6" viewBox="0 0 24 24"><circle cx="12" cy="12" r="12" fill="#1376cf"/><path d="M0 11Q1 0 12 0q12 1 12 11 0 5-6 5-4 0-4-2 2-3 0-6-6-4-14 3z" fill="#40c9a0"/><path d="M0 11Q1 0 12 0q4 0 7 2-5 0-8 5Q5 5 0 11z" fill="#27b4e0"/><path d="M9 10q-3 8 6 11 4 1 7-2-3 5-10 5Q5 22 5 16q0-4 4-6z" fill="#0c4c9c"/><path d="M10 12q1-3 4-2 1 3 0 4 0 2 4 2 4 0 6-2-2 5-7 5-6-1-7-7z" fill="#021a24"/></svg><i class="h-0.5 w-full bg-[#76b9ed]"></i></button>
  <button aria-label="File Explorer" class="ml-[5px] flex h-10 w-12 flex-col items-center justify-end bg-[#33464f]"><svg class="mb-2 h-5 w-[22px]" viewBox="0 0 22 20"><path d="M0 1h9l2 2h11v16H0z" fill="#fcd462"/><path d="M0 1h9l2 2H0z" fill="#e89b24"/><path d="M4 19v-7q0-1 1-1h12q1 0 1 1v7h-4v-4H8v4z" fill="#3a8dca"/></svg><i class="h-0.5 w-full bg-[#76b9ed]"></i></button>
  <button aria-label="Firefox" class="ml-[1px] grid h-10 w-12 place-items-center"><svg class="h-6 w-6" viewBox="0 0 24 24"><path d="M3 5l2 1q3-3 7-2l2-4q3 3 4 5l1-1q4 4 4 9a11 11 0 0 1-22 0q0-5 2-8z" fill="#ff7b1c"/><path d="M14 0q3 3 4 5l1-1q4 4 4 9-2 6-6 4 0-6-5-11z" fill="#ffd02e"/><path d="M1 13q1 10 11 11 8-1 10-8-5 5-11 3-7-2-6-9z" fill="#ff3b55"/><circle cx="12" cy="13" r="5" fill="#7a3fe0"/><path d="M6 8q4-1 6 2-3 1-5 1z" fill="#ffa02b"/></svg></button>
  <button aria-label="Outlook" class="ml-[5px] flex h-10 w-10 flex-col items-center justify-end"><svg class="mb-1.5 h-6 w-6" viewBox="0 0 24 24"><path d="M8 1h14v14H8z" fill="#28a8ea"/><path d="M15 1h7v7h-7z" fill="#50d0ff"/><path d="M8 8h7v7H8z" fill="#0f6cbd"/><path d="M6 12l9 5 9-5v11H6z" fill="#1a8fe0"/><path d="M6 23l18-11v11z" fill="#37b5f2"/><rect y="6" width="12" height="12" rx="1" fill="#0c64bd"/><circle cx="6" cy="12" r="3" fill="none" stroke="#fff" stroke-width="1.800"/></svg><i class="h-0.5 w-full bg-[#76b9ed]"></i></button>
  <div class="ml-auto flex h-10 items-center">
    <button aria-label="Show hidden icons" class="h-4 w-4"><svg viewBox="0 0 16 16"><path d="M2 11l6-6 6 6" fill="none" stroke="#fff" stroke-width="1.300"/></svg></button>
    <svg class="ml-2 h-4 w-4" viewBox="0 0 16 16" fill="none" stroke="#fff" stroke-width="1.200"><rect x="3" y="4.500" width="8" height="7" rx="1"/><path d="M11 7l3-2v6l-3-2M4 2.500Q8-1 12 2.500M4 13.500Q8 17 12 13.500"/></svg>
    <svg class="ml-2 h-4 w-4" viewBox="0 0 16 16" fill="none" stroke="#fff" stroke-width="1.200"><path d="M5 3.500h10.500v8H3.500V6M9.500 11.500v3M6 14.500h7M.5 1.500h4v4h-4zM2.500 5.500v6"/></svg>
    <svg class="ml-2 h-4 w-4" viewBox="0 0 16 16" fill="none" stroke="#fff" stroke-width="1.200"><path d="M.5 6h2.500l4-4v12L3 10.500H.500zM9 6q1.500 2 0 4.500M11.500 4q3 4 0 8M14 2q4 6 0 12"/></svg>
    <time class="w-[72px] text-center text-[11px] leading-[18px]">2:36 PM<br>12/7/2024</time>
    <button aria-label="Notifications" class="mr-5 ml-2 h-4 w-4"><svg viewBox="0 0 16 16"><path d="M.5 1.500h15v11h-5L8 15l-2.500-2.500h-5z" fill="none" stroke="#fff" stroke-width="1.200"/></svg></button>
    <i class="mr-1 h-10 w-px bg-[#3a4654]"></i>
  </div>
</footer>
</body>
</html>
